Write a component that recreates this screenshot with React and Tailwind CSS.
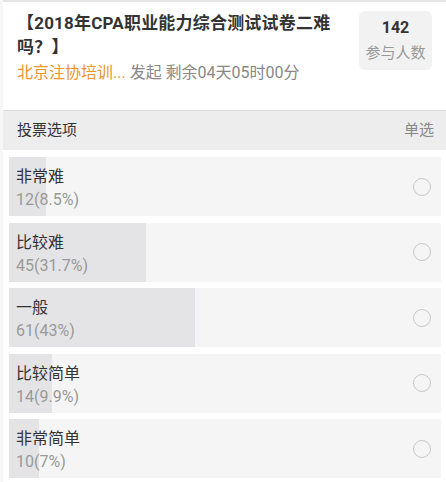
const options = [
  { label: "非常难", count: 12, pct: "8.5%" },
  { label: "比较难", count: 45, pct: "31.7%" },
  { label: "一般", count: 61, pct: "43%" },
  { label: "比较简单", count: 14, pct: "9.9%" },
  { label: "非常简单", count: 10, pct: "7%" },
];

const App = () => {
  return (
    <div className="w-[446px] h-[482px] bg-white border-l-[3px] border-[#f7f7f7] overflow-hidden font-['Roboto','Noto_Sans_CJK_SC',sans-serif]">
      {/* Header */}
      <div className="border-t-2 border-[#e6e6e6] border-b border-b-[#dcdcdc] h-[111px] flex pl-[14px] pr-[14px] pt-[9px]">
        <div className="flex-1 pr-[8px]">
          <h1 className="text-[17px] leading-[24px] font-bold text-[#333] tracking-[0.2px]">
            【2018年CPA职业能力综合测试试卷二难吗？】
          </h1>
          <p className="mt-[3px] text-[16px] leading-[22px] text-[#888]">
            <span className="text-[#f0952a]">北京注协培训...</span> 发起 剩余04天05时00分
          </p>
        </div>
        <div className="w-[73px] h-[59px] rounded-md bg-[#f2f2f2] flex flex-col items-center justify-center">
          <span className="text-[16px] leading-[22px] font-bold text-[#333]">142</span>
          <span className="text-[15px] leading-[22px] text-[#999] mt-[3px]">参与人数</span>
        </div>
      </div>

      {/* Section bar */}
      <div className="h-[39px] bg-[#ededed] flex items-center justify-between pl-[14px] pr-[12px]">
        <span className="text-[15px] text-[#333]">投票选项</span>
        <span className="text-[15px] text-[#888]">单选</span>
      </div>

      {/* Options */}
      <div className="pt-[7px] pl-[6px] pr-[5px] flex flex-col gap-[6.5px]">
        {options.map((o) => (
          <div key={o.label} className="relative h-[59px] bg-[#f5f5f5] flex items-center">
            <div className="absolute left-0 top-0 h-full bg-[#e4e4e7]" style={{ width: o.pct }}></div>
            <div className="relative flex-1 pl-[7px] self-start pt-[9px]">
              <div className="text-[16px] leading-[22px] text-[#333]">{o.label}</div>
              <div className="text-[16px] leading-[22px] text-[#999] mt-[1px]">
                {o.count}({o.pct})
              </div>
            </div>
            <div className="relative w-[18px] h-[18px] rounded-full border-[1.5px] border-[#c8c8c8] mr-[10px]"></div>
          </div>
        ))}
      </div>
    </div>
  );
};

export default App;
